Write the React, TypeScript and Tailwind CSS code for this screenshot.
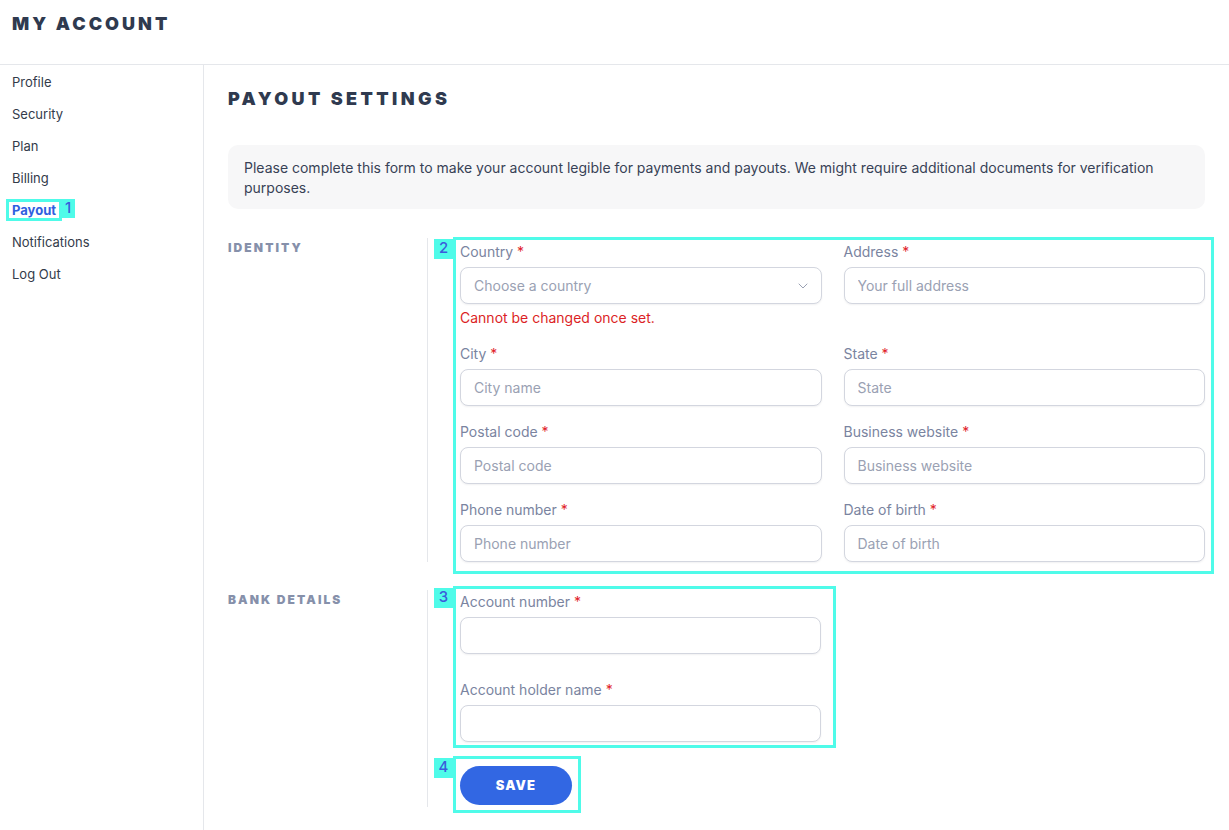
import { ChevronDown } from 'lucide-react';
import type { ReactNode } from 'react';

const navItems = ['Profile', 'Security', 'Plan', 'Billing', 'Payout', 'Notifications', 'Log Out'];

const identityFields = [
  { label: 'Country', placeholder: 'Choose a country', select: true, hint: 'Cannot be changed once set.' },
  { label: 'Address', placeholder: 'Your full address' },
  { label: 'City', placeholder: 'City name' },
  { label: 'State', placeholder: 'State' },
  { label: 'Postal code', placeholder: 'Postal code' },
  { label: 'Business website', placeholder: 'Business website' },
  { label: 'Phone number', placeholder: 'Phone number' },
  { label: 'Date of birth', placeholder: 'Date of birth' },
];

const wide = { fontFamily: 'Inter, "Liberation Sans", sans-serif' };

// cyan highlight box drawn over an element, with a numbered tag
function Mark({ n, className, tagClass, children }: { n: number; className: string; tagClass: string; children: ReactNode }) {
  return (
    <div className="relative">
      {children}
      <div className={`pointer-events-none absolute border-[3px] border-[#4ffbe9] ${className}`} />
      <div
        className={`pointer-events-none absolute flex items-start justify-center bg-[#4ffbe9] text-[15px] leading-[18px] font-medium text-[#3b5bdb] ${tagClass}`}
      >
        {n}
      </div>
    </div>
  );
}

function Field({ label, placeholder, select, hint }: { label: string; placeholder?: string; select?: boolean; hint?: string }) {
  return (
    <div className="flex flex-col">
      <label className="mb-[5px] h-5 text-[14px] leading-5 text-[#7a84a0]">
        {label} <span className="text-[#e11d2a]">*</span>
      </label>
      <div className="relative">
        <input
          placeholder={placeholder}
          readOnly={select}
          className="h-[37px] w-full rounded-lg border border-[#d3d6df] bg-white px-[13px] text-[14px] text-gray-700 shadow-[0_1px_2px_rgba(16,24,40,0.06)] outline-none placeholder:text-[#9aa1b3]"
        />
        {select && (
          <ChevronDown className="absolute top-1/2 right-[11px] h-4 w-4 -translate-y-1/2 text-[#9aa1b3]" strokeWidth={1.5} />
        )}
      </div>
      {hint && <div className="mt-1 h-5 text-[14px] leading-5 text-[#dc1f26]">{hint}</div>}
    </div>
  );
}

export default function App() {
  return (
    <div className="flex min-h-[830px] flex-col bg-white text-[#374151]" style={{ fontFamily: 'Inter, "Noto Sans", sans-serif' }}>
      <header className="h-[65px] border-b border-[#e5e7eb] px-3 pt-[13px]">
        <h1 className="text-[18px] leading-[22px] font-black tracking-[3px] text-[#2f3a4f]" style={wide}>
          MY ACCOUNT
        </h1>
      </header>

      <div className="flex flex-1">
        <aside className="w-[204px] shrink-0 border-r border-[#e5e7eb] pt-px">
          <nav className="flex flex-col">
            {navItems.map((item) =>
              item === 'Payout' ? (
                <Mark key={item} n={1} className="top-[5px] left-[6px] h-[22px] w-[56px]" tagClass="top-[5px] left-[61px] h-[19px] w-[14px]">
                  <a className="block h-8 px-3 text-[13px] leading-8 font-bold text-[#2f5fe0]">{item}</a>
                </Mark>
              ) : (
                <a key={item} className="block h-8 px-3 text-[13px] leading-8 text-[#333b4a]">
                  {item}
                </a>
              )
            )}
          </nav>
        </aside>

        <main className="flex-1 px-6 pt-[22px] pb-6">
          <h2 className="mb-[34px] text-[18px] leading-6 font-black tracking-[3.4px] text-[#2f3a4f]" style={wide}>
            PAYOUT SETTINGS
          </h2>

          <div className="rounded-[10px] bg-[#f7f7f8] px-4 pt-[13px] pb-[11px] text-[14px] leading-5 text-[#384256]">
            Please complete this form to make your account legible for payments and payouts. We might require additional documents for
            verification purposes.
          </div>

          <section className="mt-[29px] flex">
            <div className="w-[199px] shrink-0 pt-[2px] text-[12px] leading-4 font-black tracking-[2.1px] text-[#8690aa]" style={wide}>
              IDENTITY
            </div>
            <div className="flex-1 border-l border-[#e5e7eb] pl-[32px]">
              <Mark n={2} className="-top-[1px] -left-[7px] -right-[9px] -bottom-[12px]" tagClass="top-[1px] -left-[26px] h-[20px] w-[19px]">
                <div className="grid grid-cols-2 gap-x-[22px] gap-y-4 pt-[4px]">
                  {identityFields.map((f) => (
                    <Field key={f.label} {...f} />
                  ))}
                </div>
              </Mark>
            </div>
          </section>

          <section className="mt-[28px] flex">
            <div className="w-[199px] shrink-0 pt-[2px] text-[12px] leading-4 font-black tracking-[2.1px] text-[#8690aa]" style={wide}>
              BANK DETAILS
            </div>
            <div className="flex-1 border-l border-[#e5e7eb] pl-[32px]">
              <Mark n={3} className="-top-[4px] -left-[7px] -bottom-[6px] w-[383px]" tagClass="-top-[2px] -left-[26px] h-[20px] w-[19px]">
                <div className="flex w-[361px] flex-col gap-[26px] pt-[2px]">
                  <Field label="Account number" />
                  <Field label="Account holder name" />
                </div>
              </Mark>
              <div className="mt-[24px] pb-[2px]">
                <Mark n={4} className="-top-[10px] -left-[7px] -bottom-[8px] w-[128px]" tagClass="-top-[8px] -left-[26px] h-[20px] w-[19px]">
                  <button
                    className="h-[39px] w-[112px] rounded-full bg-[#3267e3] text-[13px] font-black tracking-[1.2px] text-white"
                    style={wide}
                  >
                    SAVE
                  </button>
                </Mark>
              </div>
            </div>
          </section>
        </main>
      </div>
    </div>
  );
}
